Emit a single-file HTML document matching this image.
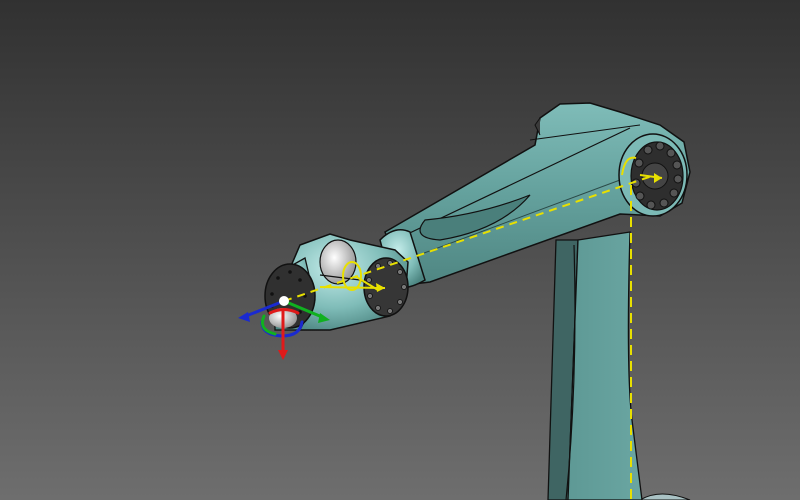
<!DOCTYPE html>
<html><head><style>
html,body{margin:0;padding:0;width:800px;height:500px;overflow:hidden}
</style></head><body>
<svg width="800" height="500" viewBox="0 0 800 500" xmlns="http://www.w3.org/2000/svg">
<defs>
<linearGradient id="bg" x1="0" y1="0" x2="0" y2="1">
<stop offset="0" stop-color="#313131"/><stop offset="1" stop-color="#6e6e6e"/>
</linearGradient>
<linearGradient id="arm" x1="0" y1="0" x2="0" y2="1">
<stop offset="0" stop-color="#7fbcb8"/><stop offset="0.5" stop-color="#64a19d"/><stop offset="1" stop-color="#4f8682"/>
</linearGradient>
<linearGradient id="col" x1="0" y1="0" x2="1" y2="0">
<stop offset="0" stop-color="#5e9995"/><stop offset="1" stop-color="#6aa6a2"/>
</linearGradient>
<radialGradient id="cyl" cx="0.4" cy="0.35" r="0.7">
<stop offset="0" stop-color="#c4ecea"/><stop offset="0.6" stop-color="#7fbcb8"/><stop offset="1" stop-color="#4d8682"/>
</radialGradient>
<radialGradient id="wh" cx="0.4" cy="0.4" r="0.7">
<stop offset="0" stop-color="#ffffff"/><stop offset="1" stop-color="#8a8a8a"/>
</radialGradient>
</defs>
<rect width="800" height="500" fill="url(#bg)"/>

<!-- base hint -->
<path d="M640 500 Q660 488 690 500 Z" fill="#a9c2c4" stroke="#111" stroke-width="1"/>

<!-- column -->
<path d="M556 240 L578 240 L568 500 L548 500 Q552 380 556 240 Z" fill="#3f6563" stroke="#111" stroke-width="1.3"/>
<path d="M578 240 L630 232 Q626 370 632 420 L642 500 L568 500 Z" fill="url(#col)" stroke="#111" stroke-width="1.3"/>
<path d="M574 245 Q578 380 566 500" fill="none" stroke="#111" stroke-width="1.2"/>

<!-- upper arm -->
<path d="M385 232 L535 145 L540 118 L560 104 L590 103 L620 112 L660 125 L684 142 L690 172 L682 203 L660 216 L620 214 L430 282 L405 285 Z" fill="url(#arm)" stroke="#111" stroke-width="1.5"/>
<path d="M540 118 L535 125 L540 135" fill="#3a3a3a" stroke="#111"/>
<path d="M395 240 L630 128" stroke="#111" stroke-width="1.2" fill="none"/>
<path d="M400 262 L620 180" stroke="#2b4a48" stroke-width="1" fill="none"/>
<path d="M425 220 Q480 215 530 195 Q500 230 440 240 Q410 238 425 220 Z" fill="#4a7f7b" stroke="#111" stroke-width="1.2"/>
<path d="M530 140 L640 125" stroke="#111" stroke-width="1" fill="none"/>
<!-- shoulder face -->
<ellipse cx="653" cy="175" rx="34" ry="41" fill="#7cbab6" stroke="#111" stroke-width="1.5"/>
<ellipse cx="657" cy="176" rx="26" ry="34" fill="#2e2e2e" stroke="#111" stroke-width="1.2"/>
<g fill="#555" stroke="#111" stroke-width="1">
<circle cx="648" cy="150" r="4"/><circle cx="660" cy="146" r="4"/><circle cx="671" cy="153" r="4"/><circle cx="677" cy="165" r="4"/><circle cx="678" cy="179" r="4"/><circle cx="674" cy="193" r="4"/><circle cx="664" cy="203" r="4"/><circle cx="651" cy="205" r="4"/><circle cx="640" cy="196" r="4"/><circle cx="636" cy="183" r="4"/><circle cx="639" cy="163" r="4"/>
</g>
<circle cx="655" cy="176" r="13" fill="#444" stroke="#111"/>

<!-- elbow cylinder -->
<path d="M380 240 Q395 225 410 232 L425 280 Q405 292 392 285 Z" fill="url(#cyl)" stroke="#111" stroke-width="1.5"/>

<!-- wrist -->
<path d="M300 245 L330 234 L350 240 L395 250 L408 262 L405 300 L390 316 L330 330 L300 330 L285 280 Z" fill="url(#cyl)" stroke="#111" stroke-width="1.5"/>
<ellipse cx="338" cy="262" rx="18" ry="22" fill="url(#wh)" stroke="#111" stroke-width="1.2"/>
<path d="M320 275 L360 280 L395 300" fill="none" stroke="#111" stroke-width="1.2"/>
<ellipse cx="386" cy="287" rx="22" ry="29" fill="#363636" stroke="#111" stroke-width="1.5"/>
<g fill="#777" stroke="#111" stroke-width=".8">
<circle cx="378" cy="266" r="2.5"/><circle cx="390" cy="263" r="2.5"/><circle cx="400" cy="272" r="2.5"/><circle cx="404" cy="287" r="2.5"/><circle cx="400" cy="302" r="2.5"/><circle cx="390" cy="311" r="2.5"/><circle cx="378" cy="308" r="2.5"/><circle cx="370" cy="296" r="2.5"/><circle cx="369" cy="280" r="2.5"/>
</g>

<!-- end flange -->
<path d="M275 275 L305 258 L315 300 L300 330 L275 330 Z" fill="url(#cyl)" stroke="#111" stroke-width="1.3"/>
<ellipse cx="290" cy="296" rx="25" ry="32" fill="#303030" stroke="#111" stroke-width="1.5"/>
<g fill="#111">
<circle cx="278" cy="278" r="1.8"/><circle cx="290" cy="272" r="1.8"/><circle cx="300" cy="280" r="1.8"/><circle cx="305" cy="296" r="1.8"/><circle cx="300" cy="312" r="1.8"/><circle cx="272" cy="294" r="1.8"/><circle cx="272" cy="306" r="1.8"/>
</g>
<ellipse cx="283" cy="318" rx="14" ry="10" fill="url(#wh)"/>

<!-- yellow -->
<g stroke="#e8e000" fill="none" stroke-width="2">
<path d="M284 301 L655 175" stroke-dasharray="8 6"/>
<path d="M631 185 L631 500" stroke-dasharray="10 6"/>
<ellipse cx="352" cy="276" rx="9" ry="14"/>
<path d="M320 287 L385 288 M355 276 L378 290"/>
<path d="M622 175 Q625 155 636 158"/>
<path d="M640 175 L662 178"/>
</g>
<path d="M385 288 L376 283 L377 292 Z M662 178 L654 173 L654 183 Z" fill="#e8e000"/>

<!-- gizmo -->
<g stroke-width="3" fill="none" stroke-linecap="round">
<path d="M262 322 Q262 335 282 336 Q300 336 302 322" stroke="#1a2ad0"/>
<path d="M264 316 Q258 330 275 334" stroke="#10b020"/>
<path d="M284 301 L246 316" stroke="#1a2ad0"/>
<path d="M284 301 L322 317" stroke="#10b020"/>
<path d="M270 313 Q284 306 298 313" stroke="#e01a1a"/>
<path d="M283 310 L283 352" stroke="#e01a1a"/>
</g>
<path d="M238 318 L248 312 L250 322 Z" fill="#1a2ad0"/>
<path d="M330 320 L320 313 L318 323 Z" fill="#10b020"/>
<path d="M283 360 L278 350 L288 350 Z" fill="#e01a1a"/>
<circle cx="284" cy="301" r="5" fill="#fff"/>
</svg>
</body></html>
